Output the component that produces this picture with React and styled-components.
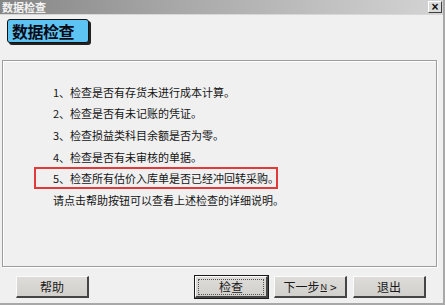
import React from 'react'
import styled, { createGlobalStyle } from 'styled-components'

const GlobalStyle = createGlobalStyle`
  html, body {
    margin: 0;
    padding: 0;
    background: #f0f0f0;
  }
  body {
    font-family: "Noto Sans CJK SC", "Liberation Sans", sans-serif;
  }
`

const Window = styled.div`
  width: 445px;
  height: 305px;
  box-sizing: border-box;
  background: #f0f0f0;
  border-right: 2px solid #a8a8a8;
  border-bottom: 2px solid #a8a8a8;
  display: flex;
  flex-direction: column;
  overflow: hidden;
`

const TitleBar = styled.div`
  height: 15px;
  box-sizing: border-box;
  display: flex;
  align-items: center;
  justify-content: space-between;
  padding: 0 1px 0 2px;
  background: linear-gradient(to right, #868686 0%, #a8a8a8 40%, #d4d4d4 100%);
  border-bottom: 1px solid #d8d8d8;
`

const TitleText = styled.span`
  color: #f4f4f4;
  font-size: 11px;
  font-weight: 700;
  line-height: 13px;
`

const CloseButton = styled.div`
  width: 14px;
  height: 12px;
  box-sizing: border-box;
  background: #dcdcdc;
  border-top: 1px solid #fff;
  border-left: 1px solid #fff;
  border-right: 1px solid #404040;
  border-bottom: 1px solid #404040;
  display: flex;
  align-items: center;
  justify-content: center;
  font-family: "Liberation Sans", sans-serif;
  font-size: 12px;
  font-weight: 700;
  line-height: 10px;
  color: #111;
`

const Header = styled.div`
  padding: 4px 0 0 7px;
  height: 41px;
  box-sizing: border-box;
`

const Badge = styled.div`
  display: inline-flex;
  align-items: center;
  width: 82px;
  height: 24px;
  box-sizing: border-box;
  padding-left: 4px;
  background: #5cc3f3;
  border: 1px solid #111;
  border-radius: 3px;
  box-shadow: 2px 2px 0 #222;
  font-size: 16px;
  font-weight: 700;
  color: #0a0a14;
  letter-spacing: -0.5px;
`

const Panel = styled.div`
  margin: 4px 6px 0 2px;
  height: 207px;
  box-sizing: border-box;
  border: 1px solid #9c9c9c;
  box-shadow: inset 1px 1px 0 #fff, 1px 1px 0 #fff;
  padding: 20px 0 0 31px;
`

const Row = styled.div`
  height: 21.6px;
  box-sizing: border-box;
  display: flex;
  align-items: center;
  padding-left: ${p => (p.$marked ? 17 : 19)}px;
  width: ${p => (p.$marked ? '244px' : 'auto')};
  border: ${p => (p.$marked ? '2px solid #e23a3a' : 'none')};
  font-size: 11px;
  color: #141414;
  white-space: nowrap;
`

const Footer = styled.div`
  display: flex;
  justify-content: space-between;
  padding: 9px 17px 0 16px;
`

const ButtonGroup = styled.div`
  display: flex;
  gap: 6px;
`

const Button = styled.div`
  width: 73px;
  height: 22px;
  box-sizing: border-box;
  display: flex;
  align-items: center;
  justify-content: center;
  background: linear-gradient(#dedcd8, #d2d0cc);
  border-top: 1px solid #fbfbfb;
  border-left: 1px solid #fbfbfb;
  border-right: 2px solid #454545;
  border-bottom: 2px solid #454545;
  outline: ${p => (p.$primary ? '1px solid #1a1a1a' : 'none')};
  font-size: 12px;
  color: #1a1a1a;
  position: relative;
`

const Focus = styled.span`
  position: absolute;
  inset: 2px 2px 1px 2px;
  border: 1px dotted #555;
`

const Mnemonic = styled.u`
  font-size: 9px;
  font-family: "Liberation Sans", sans-serif;
  margin: 0 3px 0 1px;
`

const items = [
  '1、检查是否有存货未进行成本计算。',
  '2、检查是否有未记账的凭证。',
  '3、检查损益类科目余额是否为零。',
  '4、检查是否有未审核的单据。',
  '5、检查所有估价入库单是否已经冲回转采购。',
  '请点击帮助按钮可以查看上述检查的详细说明。',
]

const App = () => {
  return (
    <>
      <GlobalStyle />
      <Window>
        <TitleBar>
          <TitleText>数据检查</TitleText>
          <CloseButton>×</CloseButton>
        </TitleBar>
        <Header>
          <Badge>数据检查</Badge>
        </Header>
        <Panel>
          {items.map((t, i) => (
            <Row key={i} $marked={i === 4}>{t}</Row>
          ))}
        </Panel>
        <Footer>
          <Button>帮助</Button>
          <ButtonGroup>
            <Button $primary>
              <Focus />
              检查
            </Button>
            <Button>
              下一步<Mnemonic>N</Mnemonic>&gt;
            </Button>
            <Button>退出</Button>
          </ButtonGroup>
        </Footer>
      </Window>
    </>
  )
}

export default App
